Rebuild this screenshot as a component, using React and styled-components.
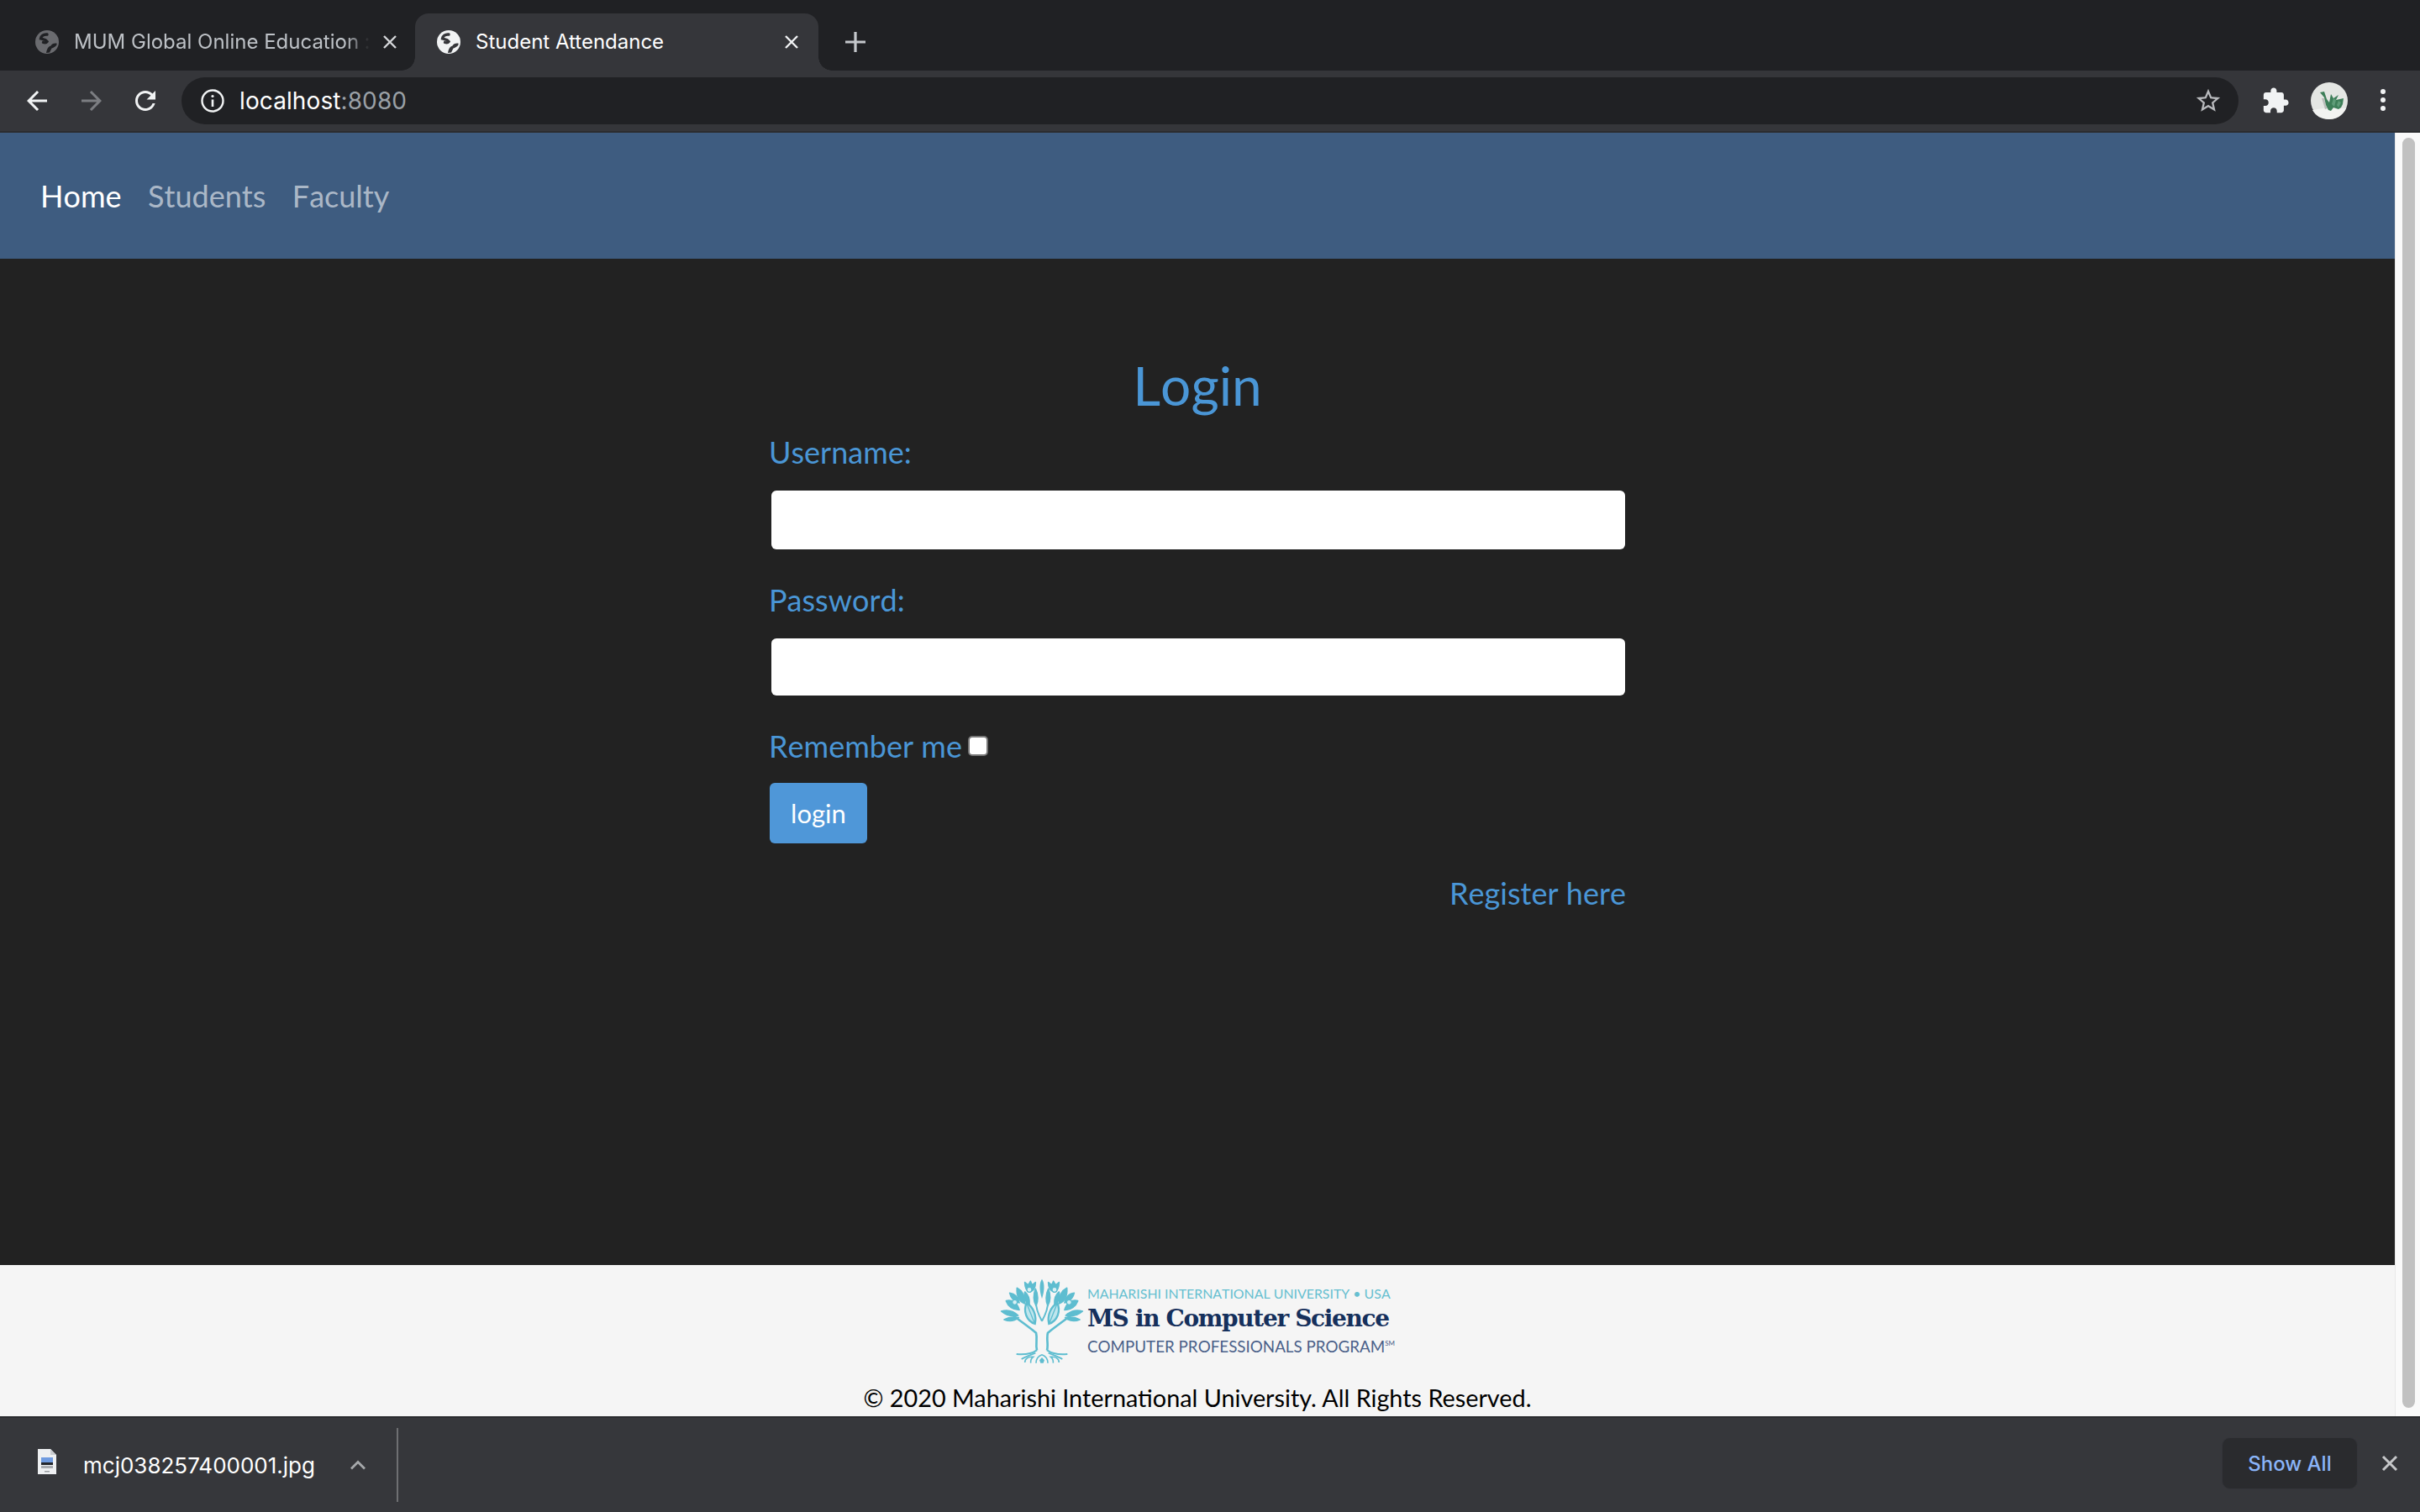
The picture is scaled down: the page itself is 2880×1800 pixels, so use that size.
import React from "react";
import styled, { createGlobalStyle } from "styled-components";

const GlobalStyle = createGlobalStyle`
  html, body { margin: 0; padding: 0; background: #222222; }
  * { box-sizing: border-box; }
`;

const Shell = styled.div`
  width: 2880px;
  height: 1800px;
  display: flex;
  flex-direction: column;
  overflow: hidden;
  font-family: Inter, "Liberation Sans", sans-serif;
`;

/* ---- browser chrome ---- */
const TabStrip = styled.div`
  height: 84px;
  flex: none;
  background: #202124;
  display: flex;
  align-items: flex-end;
  padding-left: 16px;
`;
const Tab = styled.div`
  position: relative;
  width: ${(p) => p.$w}px;
  height: 68px;
  padding: 0 0 0 ${(p) => p.$pad}px;
  display: flex;
  align-items: center;
  border-radius: 16px 16px 0 0;
  background: ${(p) => (p.$active ? "#35363a" : "transparent")};
  color: ${(p) => (p.$active ? "#ffffff" : "#bdc1c6")};
  ${(p) =>
    p.$active &&
    `
    &::before, &::after {
      content: "";
      position: absolute;
      bottom: 0;
      width: 16px;
      height: 16px;
    }
    &::before { left: -16px; background: radial-gradient(circle at 0 0, transparent 15.5px, #35363a 16px); }
    &::after { right: -16px; background: radial-gradient(circle at 100% 0, transparent 15.5px, #35363a 16px); }
  `}
`;
const TabTitle = styled.span`
  margin-left: 18px;
  width: ${(p) => p.$w}px;
  flex: none;
  font-size: 24px;
  line-height: 34px;
  white-space: nowrap;
  ${(p) =>
    p.$fade &&
    `-webkit-mask-image: linear-gradient(90deg, #000 92%, transparent 100%);`}
`;
const TabClose = styled.svg`
  width: 20px;
  height: 20px;
  flex: none;
  margin-left: ${(p) => p.$ml}px;
`;
const NewTab = styled.svg`
  width: 28px;
  height: 28px;
  margin: 0 0 20px 30px;
  align-self: flex-end;
`;

const Toolbar = styled.div`
  height: 74px;
  flex: none;
  background: #35363a;
  border-bottom: 2px solid #2b2c2f;
  display: flex;
  align-items: center;
  padding: 0 0 0 26px;
`;
const NavIcon = styled.svg`
  width: 36px;
  height: 36px;
  flex: none;
  margin-right: ${(p) => p.$mr}px;
`;
const Omnibox = styled.div`
  width: 2448px;
  height: 56px;
  flex: none;
  border-radius: 28px;
  background: #202124;
  display: flex;
  align-items: center;
  padding: 0 19px 0 22px;
  font-size: 28px;
`;
const InfoIcon = styled.svg`
  width: 30px;
  height: 30px;
  flex: none;
`;
const Host = styled.span`
  margin-left: 17px;
  color: #ffffff;
  letter-spacing: 0.1px;
`;
const Port = styled.span`
  color: #9aa0a6;
  flex: 1;
  letter-spacing: 0.1px;
`;
const StarIcon = styled.svg`
  width: 34px;
  height: 34px;
  flex: none;
`;
const ExtIcon = styled.svg`
  width: 34px;
  height: 34px;
  flex: none;
  margin-left: 27px;
`;
const Avatar = styled.svg`
  width: 44px;
  height: 44px;
  flex: none;
  margin-left: 25px;
`;
const MenuDots = styled.svg`
  width: 8px;
  height: 32px;
  flex: none;
  margin-left: 38px;
`;

/* ---- viewport ---- */
const Viewport = styled.div`
  flex: 1;
  min-height: 0;
  display: flex;
`;
const Page = styled.div`
  width: 2850px;
  display: flex;
  flex-direction: column;
  font-family: Lato, "Liberation Sans", sans-serif;
  font-kerning: none;
`;
const ScrollTrack = styled.div`
  width: 30px;
  padding: 6px 6px 10px 8px;
  background: #fafafa;
  border-left: 1px solid #e8e8e8;
  display: flex;
`;
const ScrollThumb = styled.div`
  flex: 1;
  background: #c1c1c1;
  border-radius: 8px;
`;

const NavBar = styled.nav`
  height: 150px;
  flex: none;
  background: #3e5c80;
  display: flex;
  align-items: center;
  padding-left: 48px;
  gap: 31.5px;
`;
const NavLink = styled.a`
  font-size: 36px;
  line-height: 50px;
  color: ${(p) => (p.$active ? "#ffffff" : "rgba(255,255,255,0.58)")};
`;

const Main = styled.main`
  flex: 1;
  background: #222222;
  display: flex;
  justify-content: center;
`;
const Form = styled.form`
  width: 1020px;
  padding-top: 116px;
  display: flex;
  flex-direction: column;
  align-items: flex-start;
`;
const Heading = styled.h2`
  align-self: stretch;
  margin: 0 0 19px;
  text-align: center;
  font-size: 64px;
  line-height: 70px;
  font-weight: 400;
  color: #4a96d6;
`;
const FieldLabel = styled.label`
  font-size: 36px;
  line-height: 50px;
  color: #4a96d6;
  display: flex;
  align-items: center;
`;
const TextInput = styled.input`
  align-self: stretch;
  height: ${(p) => p.$h}px;
  margin: ${(p) => p.$mt}px 1px ${(p) => p.$mb}px 3px;
  border: none;
  border-radius: 6px;
  background: #ffffff;
`;
const Check = styled.input`
  width: 24px;
  height: 24px;
  margin: 0 0 0 7px;
  appearance: none;
  background: #ffffff;
  border: 2px solid #767676;
  border-radius: 5px;
`;
const LoginButton = styled.button`
  width: 116px;
  height: 72px;
  margin: 19px 0 0 1px;
  border: none;
  border-radius: 6px;
  background: #4f97d8;
  color: #ffffff;
  font-family: inherit;
  font-kerning: none;
  font-size: 31px;
`;
const RegisterLink = styled.a`
  align-self: flex-end;
  margin: 34px 0 0 0;
  font-size: 36px;
  line-height: 50px;
  color: #4a96d6;
`;

const Footer = styled.footer`
  height: 180px;
  flex: none;
  background: #f5f5f5;
  display: flex;
  flex-direction: column;
  align-items: center;
  padding-top: 16px;
`;
const Logo = styled.div`
  display: flex;
  align-items: center;
  height: 102px;
  gap: 4px;
`;
const Tree = styled.svg`
  width: 100px;
  height: 102px;
  flex: none;
`;
const LogoText = styled.div`
  display: flex;
  flex-direction: column;
`;
const LogoTop = styled.div`
  font-size: 15.9px;
  line-height: 24px;
  color: #66bfd0;
  white-space: nowrap;
`;
const LogoMain = styled.div`
  font-family: "DejaVu Serif", "Liberation Serif", serif;
  font-weight: 700;
  font-size: 28px;
  line-height: 35px;
  letter-spacing: -1.35px;
  color: #15305c;
  white-space: nowrap;
`;
const LogoBottom = styled.div`
  font-size: 18.8px;
  line-height: 32px;
  color: #4a6089;
  white-space: nowrap;
  & sup {
    font-size: 8px;
    line-height: 0;
    vertical-align: 8px;
  }
`;
const Copyright = styled.div`
  margin-top: 18px;
  font-size: 28.8px;
  line-height: 44px;
  color: #000000;
  font-kerning: normal;
`;

/* ---- download shelf ---- */
const Shelf = styled.div`
  height: 114px;
  flex: none;
  background: #36373b;
  border-top: 2px solid #2a2b2e;
  display: flex;
  align-items: center;
  padding: 0 24px 0 44px;
`;
const FileIcon = styled.svg`
  width: 24px;
  height: 30px;
  flex: none;
  margin-top: -8px;
`;
const FileName = styled.span`
  margin-left: 31px;
  font-size: 26px;
  color: #ffffff;
`;
const Chevron = styled.svg`
  width: 20px;
  height: 12px;
  flex: none;
  margin-left: 41px;
`;
const ShelfDivider = styled.div`
  width: 2px;
  height: 88px;
  margin-left: 36px;
  background: #6e6f72;
`;
const ShowAll = styled.button`
  margin: -4px 0 0 auto;
  width: 162px;
  height: 62px;
  border: 1px solid #34353a;
  border-radius: 10px;
  background: #2a2b2e;
  color: #8ab4f8;
  font-family: inherit;
  font-size: 24px;
  font-weight: 500;
`;
const ShelfClose = styled.svg`
  width: 22px;
  height: 22px;
  flex: none;
  margin: -4px 1px 0 27px;
`;

const GlobeIcon = styled.svg`
  width: 28px;
  height: 28px;
  flex: none;
`;

const Globe = ({ fg, bg }) => (
  <GlobeIcon viewBox="0 0 28 28">
    <circle cx="14" cy="14" r="14" fill={fg} />
    <path
      d="M14 5C10 4.500 6.800 7 6.500 10C9.500 11 12 10.500 14 13.500C13 15 11 15 9.500 14.500"
      fill="none"
      stroke={bg}
      strokeWidth="3.400"
      strokeLinecap="round"
    />
    <path
      d="M25.500 15.500C22.500 15 19.500 16 18.500 18.500C16 19.500 14.500 21 13.500 24.500L13 27L17 26.500L19.500 21.500C21.500 21 24 19.500 25.500 17.500Z"
      fill={bg}
    />
  </GlobeIcon>
);

const TEAL = "#5ebdd0";

const HalfTree = () => (
  <g>
    <g fill={TEAL} stroke={TEAL} strokeWidth="5" strokeLinejoin="round">
      <path d="M112 32L124 42L132 28L138 42L150 32C150 50 142 62 130 66C118 62 112 50 112 32Z" />
      <path d="M150 55C160 75 160 100 152 115C142 100 142 75 150 55Z" />
      <path d="M84 52C100 60 112 80 112 108C92 100 82 80 84 52Z" />
      <path d="M112 66C124 76 130 92 128 112C114 104 106 84 112 66Z" />
      <path d="M45 98C65 92 85 105 92 130C70 130 52 118 45 98Z" />
      <path d="M58 70C75 72 88 85 92 105C76 100 62 88 58 70Z" />
      <path d="M28 135C50 128 72 135 88 150C68 155 45 150 28 135Z" />
      <path d="M38 165C55 155 75 155 90 158C75 170 55 172 38 165Z" />
    </g>
    <path
      d="M148 180C118 170 105 135 118 105C142 120 155 150 148 180Z"
      fill="#bfe6ed"
      stroke={TEAL}
      strokeWidth="7"
    />
    <path d="M146 176C138 156 130 136 120 110" fill="none" stroke={TEAL} strokeWidth="4" />
    <circle cx="128" cy="58" r="9" fill="#d8f0f4" stroke={TEAL} strokeWidth="4" />
    <circle cx="76" cy="103" r="9" fill="#d8f0f4" stroke={TEAL} strokeWidth="4" />
    <g fill="none" stroke={TEAL}>
      <path
        d="M155 275C149 252 158 236 152 212C130 194 105 176 72 152"
        strokeWidth="8"
      />
      <path d="M173 170C160 146 150 124 152 100" strokeWidth="6" />
      <path d="M155 274C138 286 112 291 82 288" strokeWidth="6" />
      <path d="M112 318C112 304 126 296 142 298C134 304 132 312 133 320" strokeWidth="5" />
      <path d="M150 284C130 292 112 298 100 306" strokeWidth="5" />
      <path d="M152 320C152 304 162 294 173 290" strokeWidth="5" />
    </g>
  </g>
);

const App = () => (
  <Shell>
    <GlobalStyle />
    <TabStrip>
      <Tab $w={478} $pad={26}>
        <Globe fg="#6a6b6f" bg="#202124" />
        <TabTitle $w={352} $fade>MUM Global Online Education :</TabTitle>
        <TabClose $ml={14} viewBox="0 0 20 20">
          <path d="M3 3L17 17M17 3L3 17" stroke="#d5d7da" strokeWidth="2.400" />
        </TabClose>
      </Tab>
      <Tab $w={480} $active $pad={26}>
        <Globe fg="#f1f3f4" bg="#35363a" />
        <TabTitle $w={340}>Student Attendance</TabTitle>
        <TabClose $ml={26} viewBox="0 0 20 20">
          <path d="M3 3L17 17M17 3L3 17" stroke="#f1f3f4" strokeWidth="2.400" />
        </TabClose>
      </Tab>
      <NewTab viewBox="0 0 28 28">
        <path d="M14 2V26M2 14H26" stroke="#c4c7cb" strokeWidth="3.200" />
      </NewTab>
    </TabStrip>

    <Toolbar>
      <NavIcon $mr={29} viewBox="0 0 24 24">
        <path fill="#f1f3f4" d="M20 11H7.830l5.590-5.590L12 4l-8 8 8 8 1.410-1.410L7.830 13H20v-2z" />
      </NavIcon>
      <NavIcon $mr={28} viewBox="0 0 24 24">
        <path fill="#7c7e82" d="M12 4l-1.410 1.410L16.170 11H4v2h12.170l-5.580 5.590L12 20l8-8z" />
      </NavIcon>
      <NavIcon $mr={25} viewBox="0 0 24 24">
        <path fill="#f1f3f4" d="M17.650 6.350C16.200 4.900 14.210 4 12 4c-4.420 0-7.990 3.580-7.990 8s3.570 8 7.990 8c3.730 0 6.840-2.550 7.730-6h-2.080c-.82 2.330-3.040 4-5.650 4-3.310 0-6-2.690-6-6s2.690-6 6-6c1.660 0 3.140.69 4.220 1.780L13 11h7V4l-2.350 2.350z" />
      </NavIcon>
      <Omnibox>
        <InfoIcon viewBox="0 0 30 30">
          <circle cx="15" cy="15" r="12.500" fill="none" stroke="#f1f3f4" strokeWidth="2.400" />
          <path d="M15 13.500V22" stroke="#f1f3f4" strokeWidth="2.600" />
          <circle cx="15" cy="9.500" r="1.600" fill="#f1f3f4" />
        </InfoIcon>
        <Host>localhost</Host>
        <Port>:8080</Port>
        <StarIcon viewBox="0 0 24 24">
          <path fill="#b8babd" d="M22 9.240l-7.190-.62L12 2 9.190 8.630 2 9.240l5.460 4.730L5.820 21 12 17.270 18.180 21l-1.630-7.030L22 9.240zM12 15.400l-3.760 2.270 1-4.280-3.320-2.880 4.380-.38L12 6.100l1.710 4.040 4.380.38-3.320 2.880 1 4.280L12 15.400z" />
        </StarIcon>
      </Omnibox>
      <ExtIcon viewBox="0 0 24 24">
        <path fill="#f1f3f4" d="M20.500 11H19V7c0-1.100-.9-2-2-2h-4V3.500C13 2.120 11.880 1 10.500 1S8 2.120 8 3.500V5H4c-1.100 0-1.990.9-1.990 2v3.800H3.500c1.490 0 2.700 1.210 2.700 2.700s-1.210 2.700-2.700 2.700H2V20c0 1.100.9 2 2 2h3.800v-1.500c0-1.490 1.210-2.700 2.700-2.700 1.490 0 2.700 1.210 2.700 2.700V22H17c1.100 0 2-.9 2-2v-4h1.500c1.380 0 2.500-1.120 2.500-2.500S21.880 11 20.500 11z" />
      </ExtIcon>
      <Avatar viewBox="0 0 44 44">
        <circle cx="22" cy="22" r="22" fill="#e4e6e3" />
        <path d="M2 33C14 30 30 30 42 31C38 40 30 44 22 44C12 44 6 40 2 33Z" fill="#f2f3f1" />
        <path d="M13 19L16 19L18 28L20 31L17 32L15 25Z" fill="#b9bcb9" />
        <path d="M11 12L16 11L19 20L22 24L24 14L27 19L33 15L30 21L39 19L38 26L36 30L33 32L27 30L24 34L21 33L18 27L16 18Z" fill="#3d7e58" />
        <path d="M27 19L30 21L28 29L25 26ZM33 22L36 24L33 30L31 27Z" fill="#5f9c78" />
      </Avatar>
      <MenuDots viewBox="0 0 8 32">
        <circle cx="4" cy="5" r="3" fill="#f1f3f4" />
        <circle cx="4" cy="15" r="3" fill="#f1f3f4" />
        <circle cx="4" cy="25" r="3" fill="#f1f3f4" />
      </MenuDots>
    </Toolbar>

    <Viewport>
      <Page>
        <NavBar>
          <NavLink $active>Home</NavLink>
          <NavLink>Students</NavLink>
          <NavLink>Faculty</NavLink>
        </NavBar>
        <Main>
          <Form>
            <Heading>Login</Heading>
            <FieldLabel>Username:</FieldLabel>
            <TextInput type="text" $h={70} $mt={21} $mb={35} />
            <FieldLabel>Password:</FieldLabel>
            <TextInput type="password" $h={68} $mt={21} $mb={35} />
            <FieldLabel>
              Remember me
              <Check type="checkbox" />
            </FieldLabel>
            <LoginButton type="button">login</LoginButton>
            <RegisterLink>Register here</RegisterLink>
          </Form>
        </Main>
        <Footer>
          <Logo>
            <Tree viewBox="25 18 296 306">
              <HalfTree />
              <g transform="translate(346 0) scale(-1 1)">
                <HalfTree />
              </g>
              <path d="M173 20C183 35 183 60 173 90C163 60 163 35 173 20Z" fill={TEAL} />
              <path d="M173 300L182 310L178 320H168L164 310Z" fill={TEAL} />
            </Tree>
            <LogoText>
              <LogoTop>MAHARISHI INTERNATIONAL UNIVERSITY • USA</LogoTop>
              <LogoMain>MS in Computer Science</LogoMain>
              <LogoBottom>COMPUTER PROFESSIONALS PROGRAM<sup>SM</sup></LogoBottom>
            </LogoText>
          </Logo>
          <Copyright>© 2020 Maharishi International University. All Rights Reserved.</Copyright>
        </Footer>
      </Page>
      <ScrollTrack>
        <ScrollThumb />
      </ScrollTrack>
    </Viewport>

    <Shelf>
      <FileIcon viewBox="0 0 24 30">
        <path d="M1 0H16L23 7V30H1Z" fill="#eef0f2" />
        <path d="M16 0L23 7H16Z" fill="#c9ccd0" />
        <rect x="5" y="10" width="14" height="7" fill="#6f9be0" />
        <rect x="5" y="16" width="14" height="3" fill="#23262b" />
        <rect x="5" y="20" width="14" height="3" fill="#a8abb0" />
        <rect x="9" y="26" width="6" height="1.500" fill="#9a9da1" />
      </FileIcon>
      <FileName>mcj038257400001.jpg</FileName>
      <Chevron viewBox="0 0 20 12">
        <path d="M2 10.500L10 2.500L18 10.500" fill="none" stroke="#a6a8ab" strokeWidth="2.800" />
      </Chevron>
      <ShelfDivider />
      <ShowAll type="button">Show All</ShowAll>
      <ShelfClose viewBox="0 0 22 22">
        <path d="M3 3L19 19M19 3L3 19" stroke="#c6c7c9" strokeWidth="3" />
      </ShelfClose>
    </Shelf>
  </Shell>
);

export default App;
